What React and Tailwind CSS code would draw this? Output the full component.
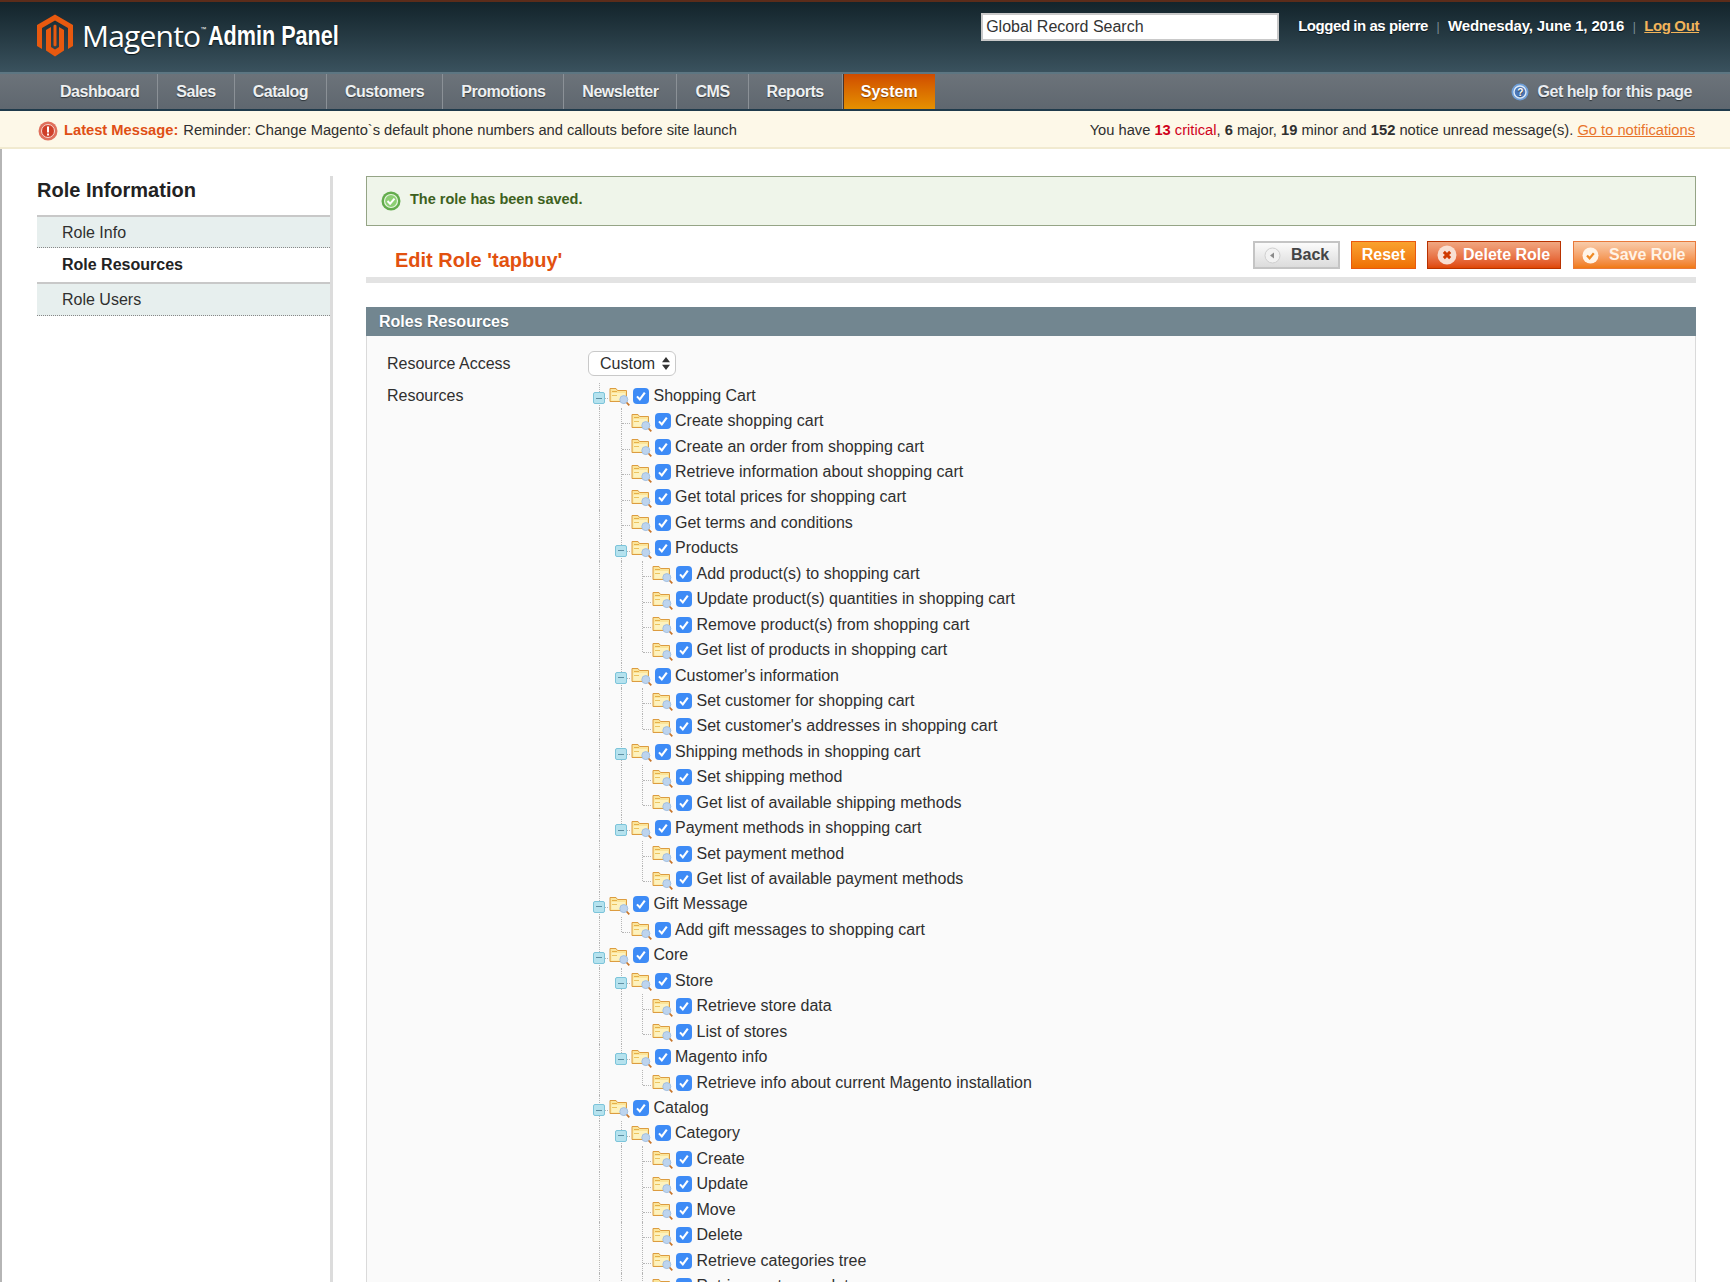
import React from 'react';

const shopping = [
  { t: 'Create shopping cart' },
  { t: 'Create an order from shopping cart' },
  { t: 'Retrieve information about shopping cart' },
  { t: 'Get total prices for shopping cart' },
  { t: 'Get terms and conditions' },
  {
    t: 'Products',
    c: [
      { t: 'Add product(s) to shopping cart' },
      { t: 'Update product(s) quantities in shopping cart' },
      { t: 'Remove product(s) from shopping cart' },
      { t: 'Get list of products in shopping cart' },
    ],
  },
  {
    t: "Customer's information",
    c: [{ t: 'Set customer for shopping cart' }, { t: "Set customer's addresses in shopping cart" }],
  },
  {
    t: 'Shipping methods in shopping cart',
    c: [{ t: 'Set shipping method' }, { t: 'Get list of available shipping methods' }],
  },
  {
    t: 'Payment methods in shopping cart',
    c: [{ t: 'Set payment method' }, { t: 'Get list of available payment methods' }],
  },
];

// "more" = the list runs on below the fold, so the guide line keeps going
const tree = [
  { t: 'Shopping Cart', c: shopping },
  { t: 'Gift Message', c: [{ t: 'Add gift messages to shopping cart' }] },
  {
    t: 'Core',
    c: [
      { t: 'Store', c: [{ t: 'Retrieve store data' }, { t: 'List of stores' }] },
      { t: 'Magento info', c: [{ t: 'Retrieve info about current Magento installation' }] },
    ],
  },
  {
    t: 'Catalog',
    more: true,
    c: [
      {
        t: 'Category',
        more: true,
        c: [
          { t: 'Create' },
          { t: 'Update' },
          { t: 'Move' },
          { t: 'Delete' },
          { t: 'Retrieve categories tree' },
          { t: 'Retrieve category data', more: true },
        ],
      },
    ],
  },
];

function flatten(nodes, guides = []) {
  return nodes.flatMap((node, i) => {
    const last = i === nodes.length - 1 && !node.more;
    const row = { label: node.t, guides, last, parent: !!node.c };
    return [row, ...(node.c ? flatten(node.c, [...guides, !last]) : [])];
  });
}

const rows = flatten(tree);

const navItems = ['Dashboard', 'Sales', 'Catalog', 'Customers', 'Promotions', 'Newsletter', 'CMS', 'Reports'];

function MagentoLogo() {
  return (
    <svg width="36" height="43" viewBox="0 0 36 42" className="shrink-0">
      <path d="M18 0L36 10.5V31.5L31 34.5V13.5L18 6L5 13.5V34.5L0 31.5V10.5Z" fill="#e8590f" />
      <path d="M9 15.5L14 12.5V32.5L18 35L22 32.5V12.5L27 15.5V36L18 42L9 36Z" fill="#e8590f" />
      <path d="M16.5 11L18 10L19.5 11V31L18 32L16.5 31Z" fill="#e8590f" />
    </svg>
  );
}

function FolderIcon() {
  return (
    <svg width="21" height="19" viewBox="0 0 21 19" className="mt-[2px] shrink-0">
      <path d="M1 14.5V1.5h6l1.5 2h9V14.5z" fill="#fbe59a" stroke="#dc9c40" />
      <path d="M2.5 6h13.5v7.5H2.5z" fill="#fdf2bf" />
      <path d="M3 4.5h5" stroke="#e6b048" />
      <path d="M3 8.5h5" stroke="#ecc35e" />
      <circle cx="14.8" cy="12.6" r="4" fill="#bdd4ee" stroke="#a3c0e0" />
      <path d="M17.6 15.5l2.7 2.8" stroke="#c8762b" strokeWidth="1.8" />
    </svg>
  );
}

function CheckIcon() {
  return (
    <svg width="16" height="16" viewBox="0 0 16 16" className="ml-[3px] shrink-0">
      <rect width="16" height="16" rx="4" fill="#3d8bf6" />
      <path d="M4 8.4l2.8 3 5-6.8" fill="none" stroke="#fff" strokeWidth="2.1" />
    </svg>
  );
}

function TreeRow({ row }) {
  return (
    <div className="flex h-[25.44px] items-center">
      {row.guides.map((on, i) => (
        <span key={i} className="h-full w-[21.5px] shrink-0 pl-[6px]">
          {on && <span className="block h-full border-l border-dotted border-[#b5b5b5]" />}
        </span>
      ))}
      <span className="relative h-full w-[16px] shrink-0">
        <span
          className={`absolute left-[6px] top-0 border-l border-dotted border-[#b5b5b5] ${row.last ? 'h-[15px]' : 'h-full'}`}
        />
        <span className="absolute left-[7px] top-[15px] w-[8px] border-t border-dotted border-[#b5b5b5]" />
        {row.parent && (
          <span className="absolute left-0 top-[9px] flex h-[12px] w-[12px] items-center justify-center rounded-[2px] border border-[#7cc4da] bg-[#b5e2ee]">
            <span className="h-px w-[6px] bg-[#5d8fa3]" />
          </span>
        )}
      </span>
      <FolderIcon />
      <CheckIcon />
      <span className="ml-[4.5px] whitespace-nowrap">{row.label}</span>
    </div>
  );
}

export default function App() {
  return (
    <div className="flex h-screen w-full flex-col overflow-hidden bg-white text-[16px] text-[#2f2f2f] [font-family:'Liberation_Sans',Arial,sans-serif]">
      {/* Header */}
      <header className="flex h-[72px] shrink-0 items-center border-t-2 border-[#5b2c1a] bg-gradient-to-b from-[#13242b] to-[#3a525e] pl-[37px] pr-[31px] text-white">
        <div className="mb-[3px] flex items-center">
          <MagentoLogo />
          <span className="ml-[9px] text-[30px] font-medium leading-none tracking-[-0.8px] [font-family:'Open_Sans',sans-serif] [text-shadow:0_1px_1px_#0b1519]">
            Magento
          </span>
          <span className="mb-[12px] text-[6px]">™</span>
          <span className="ml-[2px] mt-[2px] w-[130px] origin-left scale-x-[0.8] whitespace-nowrap text-[27px] font-bold leading-none [text-shadow:0_1px_2px_#0b1519]">
            Admin Panel
          </span>
        </div>
        <div className="mb-[21px] ml-auto flex items-center">
          <div className="flex h-[28px] w-[298px] items-center border-2 border-[#c9c9c9] bg-white pl-[3px] text-[16px] text-[#333]">
            Global Record Search
          </div>
          <span className="ml-[19px] text-[15px] font-bold tracking-[-0.45px] [text-shadow:0_1px_1px_#0b1519]">Logged in as pierre</span>
          <span className="mx-[8.5px] text-[12px] text-[#7d8e96]">|</span>
          <span className="text-[15px] font-bold tracking-[-0.15px] [text-shadow:0_1px_1px_#0b1519]">Wednesday, June 1, 2016</span>
          <span className="mx-[8.5px] text-[12px] text-[#7d8e96]">|</span>
          <a className="text-[15px] font-bold tracking-[-0.4px] text-[#f2b45a] underline">Log Out</a>
        </div>
      </header>

      {/* Nav */}
      <nav className="flex h-[39px] shrink-0 items-stretch border-y-2 border-b-[#1f3a4b] border-t-[#5d7682] bg-gradient-to-b from-[#6c737a] to-[#5f676f] pl-[42px] pr-[38px] text-[16px] font-bold text-[#eef0f1] [text-shadow:0_1px_1px_#2f363b]">
        {navItems.map((item) => (
          <a key={item} className="flex items-center border-r border-[#8b9197] px-[18px] tracking-[-0.48px] last:border-r-0">
            {item}
          </a>
        ))}
        <a className="flex items-center border-l border-[#4a3428] bg-gradient-to-b from-[#cf4b00] to-[#e59000] px-[17px] text-white [text-shadow:0_1px_1px_#8a3a00]">
          System
        </a>
        <div className="ml-auto flex items-center gap-[8px] tracking-[-0.45px] text-[#e9ecf0]">
          <svg width="18" height="18" viewBox="0 0 18 18">
            <circle cx="9" cy="9" r="8.5" fill="#6f9fd8" />
            <circle cx="9" cy="9" r="6" fill="#4c78b8" stroke="#dfeaf6" strokeWidth="1.4" />
            <text x="9" y="12.5" textAnchor="middle" fontSize="10" fontWeight="700" fill="#fff">?</text>
          </svg>
          Get help for this page
        </div>
      </nav>

      {/* Notice bar */}
      <div className="flex h-[38px] shrink-0 items-center border-b-2 border-[#f1ead0] bg-[#fdf8e8] pl-[38px] pr-[35px] pt-[3px] text-[14.7px]">
        <svg width="20" height="20" viewBox="0 0 20 20" className="shrink-0">
          <circle cx="10" cy="10" r="9.5" fill="#e0705c" />
          <circle cx="10" cy="10" r="6.5" fill="#cf3f28" stroke="#f7d9d2" />
          <rect x="9" y="5.5" width="2" height="6" fill="#fff" />
          <rect x="9" y="12.5" width="2" height="2" fill="#fff" />
        </svg>
        <strong className="ml-[6px] text-[#df4f15]">Latest Message:</strong>
        <span className="ml-[5px]">Reminder: Change Magento`s default phone numbers and callouts before site launch</span>
        <span className="ml-auto">
          You have <strong className="text-[#d0021b]">13</strong> <span className="text-[#d0021b]">critical</span>, <strong>6</strong> major, <strong>19</strong> minor and <strong>152</strong> notice unread message(s).{' '}
          <a className="text-[#e8742c] underline">Go to notifications</a>
        </span>
      </div>

      {/* Page */}
      <div className="flex min-h-0 flex-1 border-l-2 border-[#b5b5b5] pl-[35px] pr-[34px]">
        <aside className="mt-[27px] w-[296px] shrink-0 border-r-[3px] border-[#dcdcdc]">
          <h3 className="flex h-[39px] items-start pt-[2px] text-[20px] font-bold leading-[24px] text-[#222]">Role Information</h3>
          <a className="flex h-[33px] items-center border-b border-t-2 border-b-[#888] border-t-[#c8c8c8] bg-[#e7efee] pl-[25px] pt-[2px] [border-bottom-style:dotted]">
            Role Info
          </a>
          <a className="flex h-[34px] items-center pl-[25px] font-bold text-[#222]">Role Resources</a>
          <a className="flex h-[34px] items-center border-b border-t-2 border-b-[#888] border-t-[#c8c8c8] bg-[#e7efee] pl-[25px] pt-[1px] [border-bottom-style:dotted]">
            Role Users
          </a>
        </aside>

        <main className="ml-[33px] min-w-0 flex-1 pt-[27px]">
          <div className="flex h-[50px] items-center border border-[#95a486] bg-[#eff5ea] pl-[14px] text-[14.5px] font-bold text-[#3d6020]">
            <svg width="20" height="20" viewBox="0 0 20 20" className="shrink-0">
              <circle cx="10" cy="10" r="9.5" fill="#63ac4d" />
              <circle cx="10" cy="10" r="6.5" fill="#8ccf73" stroke="#e7f5e0" strokeWidth="1.2" />
              <path d="M6.5 10l2.6 2.7 4.4-5" fill="none" stroke="#fff" strokeWidth="2" />
            </svg>
            <span className="mb-[2px] ml-[9px]">The role has been saved.</span>
          </div>

          <div className="mt-[15px] flex h-[42px] items-start justify-between border-b-[6px] border-[#e3e3e3] pl-[29px]">
            <h3 className="mt-[7px] text-[20px] font-bold leading-[24px] text-[#e2510f]">Edit Role 'tapbuy'</h3>
            <div className="flex text-[16px] font-bold">
              <button className="flex h-[28px] w-[87px] items-center border-2 border-[#c4c4c4] bg-gradient-to-b from-[#fbfbfb] to-[#dcdcdc] pl-[9px] text-[#444]">
                <svg width="17" height="17" viewBox="0 0 17 17">
                  <circle cx="8.5" cy="8.5" r="7.5" fill="#f2f2f2" stroke="#cfcfcf" />
                  <path d="M10 5.5v6l-4-3z" fill="#8a8a8a" />
                </svg>
                <span className="ml-[10px]">Back</span>
              </button>
              <button className="ml-[11px] flex h-[28px] w-[65px] items-center justify-center border border-[#e9580f] bg-gradient-to-b from-[#f9a22e] to-[#ef6f00] text-white">
                Reset
              </button>
              <button className="ml-[11px] flex h-[28px] w-[134px] items-center border border-[#b83200] bg-gradient-to-b from-[#f0a781] to-[#df4700] pl-[9px] text-white">
                <svg width="20" height="20" viewBox="0 0 19 19">
                  <circle cx="9.5" cy="9.5" r="9" fill="#f8dfd2" />
                  <path d="M6.5 6.5l6 6M12.5 6.5l-6 6" stroke="#cf3a00" strokeWidth="2.8" />
                </svg>
                <span className="ml-[6px]">Delete Role</span>
              </button>
              <button className="ml-[12px] flex h-[28px] w-[123px] items-center border border-[#e9793a] bg-gradient-to-b from-[#f8ccaa] to-[#f07a0e] pl-[8px] text-[#fff3e6]">
                <svg width="17" height="17" viewBox="0 0 17 17">
                  <circle cx="8.5" cy="8.5" r="8" fill="#fff4e8" />
                  <path d="M5 8.5l2.6 2.8 4.2-5" fill="none" stroke="#ef8a24" strokeWidth="2.2" />
                </svg>
                <span className="ml-[10px]">Save Role</span>
              </button>
            </div>
          </div>

          <div className="mt-[24px] flex h-[29px] items-center bg-[#728690] pl-[13px] text-[16px] font-bold text-white [text-shadow:0_1px_1px_#4d5f68]">
            Roles Resources
          </div>
          <div className="h-full border-x border-[#dadada] bg-[#fafafa] pl-[20px] pt-[15px]">
            <div className="flex h-[25px] items-center">
              <span className="w-[201px] shrink-0">Resource Access</span>
              <div className="flex h-[25px] w-[88px] items-center rounded-[6px] border border-[#c9c9c9] bg-white pl-[11px]">
                Custom
                <svg width="8" height="13" viewBox="0 0 8 13" className="ml-[7px]">
                  <path d="M4 0l4 5.2H0zM4 13L0 7.8h8z" fill="#333" />
                </svg>
              </div>
            </div>
            <div className="mt-[7px] flex">
              <span className="mt-[1px] w-[206px] shrink-0">Resources</span>
              <div>
                {rows.map((row, i) => (
                  <TreeRow key={i} row={row} />
                ))}
              </div>
            </div>
          </div>
        </main>
      </div>
    </div>
  );
}
